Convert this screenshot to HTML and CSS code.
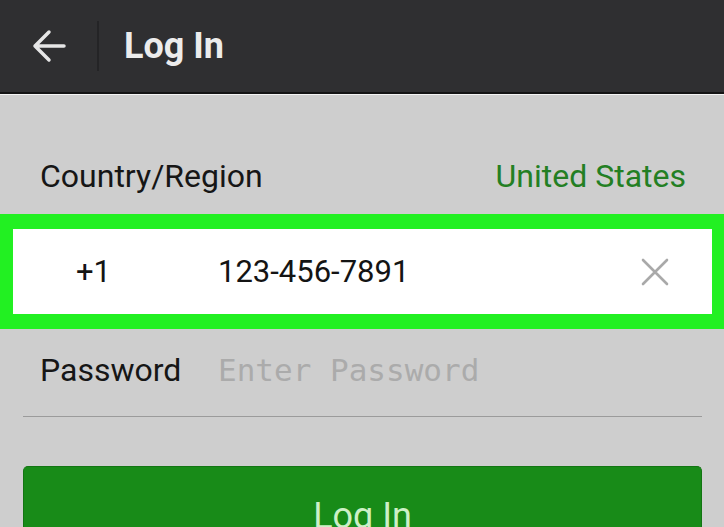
FILE: index.html
```html
<!DOCTYPE html>
<html lang="en">
<head>
    <meta charset="UTF-8">
    <meta name="viewport" content="width=device-width, initial-scale=1.0">
    <title>Log In</title>
    <link rel="stylesheet" href="styles.css">
</head>
<body>
    <header class="topbar">
        <button class="back-btn" aria-label="Back">
            <svg width="34" height="34" viewBox="0 0 34 34">
                <path d="M32 17H3M17 3L3 17l14 14" fill="none" stroke="#e6e6e6" stroke-width="3.5" stroke-linecap="round" stroke-linejoin="round"/>
            </svg>
        </button>
        <span class="divider"></span>
        <h1 class="title">Log In</h1>
    </header>

    <div class="country-row">
        <span>Country/Region</span>
        <span class="country-value">United States</span>
    </div>

    <div class="phone-box">
        <span class="dial-code">+1</span>
        <span class="phone-number">123-456-7891</span>
        <svg class="clear-icon" width="28" height="28" viewBox="0 0 28 28">
            <path d="M2 2L26 26M26 2L2 26" fill="none" stroke="#a9a9a9" stroke-width="2.6" stroke-linecap="round"/>
        </svg>
    </div>

    <div class="password-row">
        <label for="password">Password</label>
        <input type="password" id="password" placeholder="Enter Password">
    </div>

    <button class="login-btn">Log In</button>
</body>
</html>
```

FILE: styles.css
```css
/* Global styles */
body {
    margin: 0;
    background-color: #cecece;
    font-family: Roboto, 'Noto Sans', sans-serif;
    color: #161616;
    overflow: hidden;
}

/* Top bar */
.topbar {
    height: 92px;
    background-color: #2f2f31;
    border-bottom: 2px solid #141414;
    box-shadow: 0 1px 0 #f4f4f4;
    display: flex;
    align-items: center;
}

.back-btn {
    width: 97px;
    height: 92px;
    padding: 0 0 0 32px;
    margin: 0;
    border: none;
    background: none;
    display: flex;
    align-items: center;
}

.divider {
    width: 2px;
    height: 50px;
    background-color: #242426;
}

.title {
    margin: 0 0 0 25px;
    font-size: 36px;
    font-weight: bold;
    color: #ececec;
    line-height: 40px;
}

/* Country row */
.country-row {
    display: flex;
    justify-content: space-between;
    padding: 62px 38px 18px 40px;
    font-size: 32px;
    line-height: 40px;
}

.country-value {
    color: #237f23;
}

/* Phone number field */
.phone-box {
    display: flex;
    align-items: center;
    height: 85px;
    background-color: #ffffff;
    border-style: solid;
    border-color: #22f022;
    border-width: 15px 12px 15px 13px;
    font-size: 31px;
    color: #141414;
}

.dial-code {
    width: 142px;
    padding-left: 63px;
}

.phone-number {
    flex: 1;
}

.clear-icon {
    margin-right: 43px;
}

/* Password row */
.password-row {
    display: flex;
    align-items: center;
    margin: 0 22px 0 23px;
    padding: 21px 0 26px 17px;
    border-bottom: 1px solid #9b9b9b;
    line-height: 40px;
}

.password-row label {
    width: 178px;
    font-size: 32px;
}

.password-row input {
    flex: 1;
    padding: 0;
    border: none;
    outline: none;
    background: transparent;
    font-family: 'DejaVu Sans Mono', monospace;
    font-size: 31px;
    line-height: 40px;
}

.password-row input::placeholder {
    color: #ababab;
}

/* Log In button, cut by the bottom of the screen */
.login-btn {
    display: block;
    box-sizing: border-box;
    width: 679px;
    height: 61px;
    margin: 49px 0 0 23px;
    padding: 27px 0 0;
    overflow: hidden;
    border: 1px solid #137513;
    border-bottom: none;
    border-radius: 5px 5px 0 0;
    background-color: #188b18;
    color: #cdf0c6;
    font-family: Roboto, sans-serif;
    font-size: 36px;
    line-height: 44px;
    text-align: center;
}
```
